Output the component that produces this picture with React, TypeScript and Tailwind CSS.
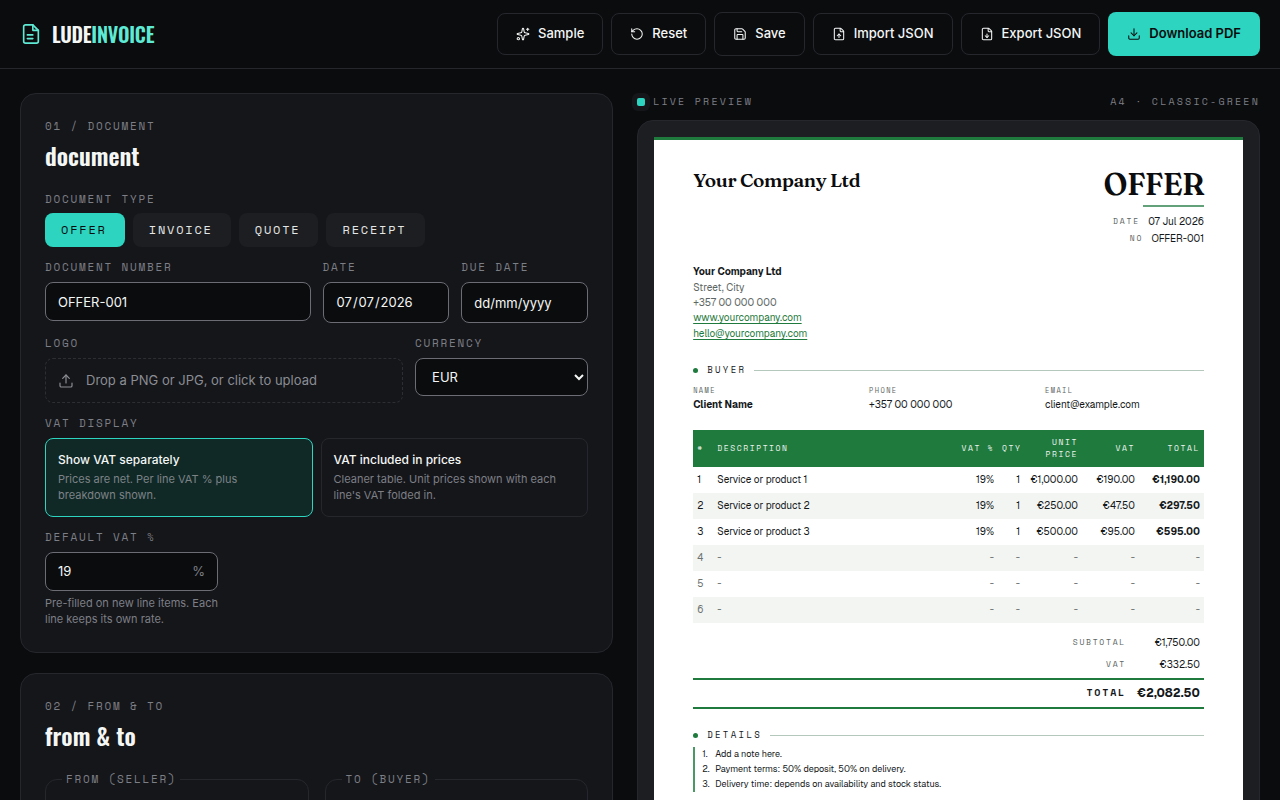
import type { ReactNode } from "react";
import { Download, FileDown, FileUp, RotateCcw, Save, Sparkles, Upload } from "lucide-react";

const mono = "font-['Space_Mono','Liberation_Mono',monospace]";
const condensed = "font-['Oswald','Roboto_Condensed','Liberation_Sans_Narrow',sans-serif]";
const serif = "font-['Fraunces','Liberation_Serif',serif] font-[550] tracking-[-0.02em] text-[#0b0c0e]";
const eyebrow = `${mono} text-[11px] leading-[17px] tracking-[0.16em] uppercase text-[#7d7f86]`;
const inputBox =
  "w-full rounded-lg border border-[#6b6c74] bg-[#0b0c0e] px-3 text-[13px] text-[#f4f7f5] outline-none focus:border-[#2dd4bf]";
const toolButton =
  "flex h-[42px] items-center gap-2 rounded-lg border border-[#26272d] px-[18px] text-[13px] font-medium text-[#f4f7f5]";

function Field({ label, id, className, children }: { label: string; id: string; className: string; children: ReactNode }) {
  return (
    <div className={`flex flex-col items-start gap-1.5 ${className}`}>
      <label htmlFor={id} className={eyebrow}>{label}</label>
      {children}
    </div>
  );
}

function Card({ step, title, children }: { step: string; title: string; children: ReactNode }) {
  return (
    <section className="rounded-2xl border border-[#26272d] bg-[#15161a] p-6">
      <p className={eyebrow}>{step}</p>
      <h2 className={`${condensed} mt-1 mb-5 text-2xl leading-8 font-semibold text-[#f4f7f5]`}>{title}</h2>
      {children}
    </section>
  );
}

function BrandMark() {
  return (
    <svg width="22" height="22" viewBox="0 0 24 24" fill="none" stroke="currentColor" strokeWidth="1.8" strokeLinecap="round" strokeLinejoin="round" className="text-[#5eead4]" aria-hidden>
      <path d="M14 2H6a2 2 0 0 0-2 2v16a2 2 0 0 0 2 2h12a2 2 0 0 0 2-2V8z" />
      <path d="M14 2v6h6M8 13h6M8 17h6" />
    </svg>
  );
}

function Header() {
  return (
    <header className="flex items-center justify-between border-b border-[#26272d] px-5 py-3">
      <a href="#" className={`${condensed} flex items-center gap-2.5 text-xl leading-7 font-semibold tracking-[-0.01em] text-[#f4f7f5]`}>
        <BrandMark />
        <span>LUDE<span className="text-[#5eead4]">INVOICE</span></span>
      </a>
      <div className="flex items-center gap-2">
        <button className={toolButton}><Sparkles size={14} strokeWidth={1.8} />Sample</button>
        <button className={toolButton}><RotateCcw size={14} strokeWidth={1.8} />Reset</button>
        <button className="flex h-11 items-center gap-2 rounded-lg border border-[#26272d] px-[18px] text-[13px] font-medium text-[#f4f7f5]"><Save size={14} strokeWidth={1.8} />Save</button>
        <button className={toolButton}><FileUp size={14} strokeWidth={1.8} />Import JSON</button>
        <button className={toolButton}><FileDown size={14} strokeWidth={1.8} />Export JSON</button>
        <button className="flex h-11 items-center gap-2 rounded-lg bg-[#2dd4bf] px-[19px] text-[13px] font-semibold text-[#0b0c0e]"><Download size={14} strokeWidth={1.8} />Download PDF</button>
      </div>
    </header>
  );
}

const types = ["Offer", "Invoice", "Quote", "Receipt"];

function DocumentCard() {
  return (
    <Card step="01 / Document" title="document">
      <div className="grid grid-cols-12 gap-3">
        <div className="col-span-12 flex flex-col gap-[5px]">
          <p className={eyebrow}>Document type</p>
          <div className="flex gap-2">
            {types.map((t, i) => (
              <button
                key={t}
                aria-pressed={i === 0}
                className={`${mono} h-[34px] rounded-lg pr-[18px] pl-4 text-xs tracking-[0.15em] uppercase ${i === 0 ? "bg-[#2dd4bf] text-[#0b0c0e]" : "bg-[#1d1e22] text-[#e4e7e5]"}`}
              >
                {t}
              </button>
            ))}
          </div>
        </div>
        <Field label="Document number" id="number" className="col-span-6">
          <input id="number" defaultValue="OFFER-001" className={`${inputBox} h-[39px]`} />
        </Field>
        <Field label="Date" id="date" className="col-span-3">
          <input id="date" type="date" defaultValue="2026-07-07" className={`${inputBox} h-[41px] [&::-webkit-calendar-picker-indicator]:opacity-0`} />
        </Field>
        <Field label="Due date" id="due" className="col-span-3">
          <input id="due" placeholder="dd/mm/yyyy" className={`${inputBox} h-[41px] placeholder:text-[#f4f7f5]`} />
        </Field>
        <Field label="Logo" id="logo" className="col-span-8">
          <button id="logo" className="flex h-[45px] w-full items-center gap-3 rounded-lg border border-dashed border-[#2d2e34] px-3 text-[13px] text-[#8b8d94]">
            <Upload size={16} strokeWidth={1.8} />
            Drop a PNG or JPG, or click to upload
          </button>
        </Field>
        <Field label="Currency" id="currency" className="col-span-4">
          <select id="currency" className={`${inputBox} h-[38px]`}>
            <option>EUR</option>
            <option>USD</option>
            <option>GBP</option>
          </select>
        </Field>
        <div className="col-span-12 flex flex-col gap-1.5">
          <p className={eyebrow}>VAT display</p>
          <div className="grid grid-cols-2 gap-2">
            <button aria-pressed className="rounded-lg border border-[#2dd4bf] bg-[#102927] pt-3 pr-5 pb-[13px] pl-3 text-left">
              <span className="block text-xs leading-[18px] font-medium text-[#f4f7f5]">Show VAT separately</span>
              <span className="mt-0.5 block text-[11px] leading-4 text-[#7d8286]">Prices are net. Per line VAT % plus breakdown shown.</span>
            </button>
            <button aria-pressed={false} className="rounded-lg border border-[#26272d] pt-3 pr-5 pb-[13px] pl-3 text-left">
              <span className="block text-xs leading-[18px] font-medium text-[#f4f7f5]">VAT included in prices</span>
              <span className="mt-0.5 block text-[11px] leading-4 text-[#7d7f86]">Cleaner table. Unit prices shown with each line's VAT folded in.</span>
            </button>
          </div>
        </div>
        <Field label="Default VAT %" id="vat" className="col-span-4 pb-px">
          <div className="flex h-[39px] w-full items-center rounded-lg border border-[#6b6c74] bg-[#0b0c0e] px-3 text-[13px] focus-within:border-[#2dd4bf]">
            <input id="vat" defaultValue="19" inputMode="decimal" className="min-w-0 flex-1 bg-transparent text-[#f4f7f5] outline-none" />
            <span className="text-[#7d7f86]">%</span>
          </div>
          <p className="-mt-0.5 text-[11px] leading-4 text-[#7d7f86]">Pre-filled on new line items. Each line keeps its own rate.</p>
        </Field>
      </div>
    </Card>
  );
}

function Party({ title }: { title: string }) {
  return (
    <fieldset className="min-w-0 rounded-xl border border-[#26272d] px-4 pt-6 pb-4">
      <legend className={`${eyebrow} px-1`}>{title}</legend>
      <input aria-label={title} className={`${inputBox} h-[39px]`} />
    </fieldset>
  );
}

const pdfLabel = `${mono} uppercase text-[#5d6663]`;

function SectionTitle({ children }: { children: string }) {
  return (
    <div className="flex items-center">
      <span className="mr-[9px] size-[5px] rounded-full bg-[#1f7a3d]" />
      <h3 className={`${mono} mr-2 text-[9px] leading-4 tracking-[0.26em] uppercase text-[#14181a]`}>{children}</h3>
      <span className="h-px flex-1 bg-[#b4c8bb]" />
    </div>
  );
}

const rows = [
  ["1", "Service or product 1", "19%", "1", "€1,000.00", "€190.00", "€1,190.00"],
  ["2", "Service or product 2", "19%", "1", "€250.00", "€47.50", "€297.50"],
  ["3", "Service or product 3", "19%", "1", "€500.00", "€95.00", "€595.00"],
  ["4", "-", "-", "-", "-", "-", "-"],
  ["5", "-", "-", "-", "-", "-", "-"],
  ["6", "-", "-", "-", "-", "-", "-"],
];
const heads = ["#", "Description", "VAT %", "Qty", "Unit price", "VAT", "Total"];
const notes = ["Add a note here.", "Payment terms: 50% deposit, 50% on delivery.", "Delivery time: depends on availability and stock status."];

function Paper() {
  return (
    <article className="border-t-[3px] border-[#1f7a3d] bg-white px-[39px] pt-[31px] pb-12 font-['Geist','Inter',sans-serif] text-[10px] text-[#14181a]">
      <div className="flex h-[93px] items-start justify-between">
        <h1 className={`${serif} text-[19px] leading-[18px]`}>Your Company Ltd</h1>
        <div className="flex flex-col items-end">
          <p className={`${serif} mb-1.5 text-[30px] leading-7`}>OFFER</p>
          <span className="mb-[6px] h-0.5 w-[61px] bg-[#63a17b]" />
          <p className="flex items-center gap-2 leading-[17px]"><span className={`${pdfLabel} text-[8px] tracking-[0.24em]`}>Date</span>07 Jul 2026</p>
          <p className="flex items-center gap-2 leading-[17px]"><span className={`${pdfLabel} text-[8px] tracking-[0.24em]`}>No</span>OFFER-001</p>
        </div>
      </div>
      <address className="flex flex-col items-start leading-4 text-[#5d6663] not-italic">
        <strong className="font-bold text-[#14181a]">Your Company Ltd</strong>
        <span className="leading-[15px]">Street, City</span>
        <span className="leading-[15px]">+357 00 000 000</span>
        <a href="#" className="text-[#1f7a3d] underline underline-offset-2">www.yourcompany.com</a>
        <a href="#" className="text-[#1f7a3d] underline underline-offset-2">hello@yourcompany.com</a>
      </address>

      <div className="mt-5">
        <SectionTitle>Buyer</SectionTitle>
        <dl className="mt-[7px] grid grid-cols-3 gap-[17px] leading-[14px]">
          <div>
            <dt className={`${pdfLabel} text-[7px] leading-3 tracking-[0.2em]`}>Name</dt>
            <dd className="mt-px font-bold">Client Name</dd>
          </div>
          <div>
            <dt className={`${pdfLabel} text-[7px] leading-3 tracking-[0.2em]`}>Phone</dt>
            <dd className="mt-px">+357 00 000 000</dd>
          </div>
          <div>
            <dt className={`${pdfLabel} text-[7px] leading-3 tracking-[0.2em]`}>Email</dt>
            <dd className="mt-px">client@example.com</dd>
          </div>
        </dl>
      </div>

      <table className="mt-[18px] w-full table-fixed border-collapse">
        <colgroup>
          <col className="w-5" /><col /><col className="w-[42px]" /><col className="w-[26px]" /><col className="w-[58px]" /><col className="w-[57px]" /><col className="w-[65px]" />
        </colgroup>
        <thead>
          <tr className="h-[37px] bg-[#1f7a3d] text-[#eef5f0]">
            {heads.map((h, i) => (
              <th key={h} scope="col" className={`${mono} px-1 pb-0.5 text-[8px] leading-3 font-normal tracking-[0.2em] uppercase ${i < 2 ? "text-left" : "text-right"} ${i === 2 || i === 3 ? "whitespace-nowrap" : ""}`}>{h}</th>
            ))}
          </tr>
        </thead>
        <tbody>
          {rows.map((r, n) => (
            <tr key={r[0]} className={`h-[26px] ${n % 2 ? "bg-[#f3f5f3]" : ""} ${n > 2 ? "text-[#6d7471]" : ""}`}>
              {r.map((c, i) => (
                <td key={i} className={`px-1 pb-0.5 ${i < 2 ? "text-left" : "text-right"} ${i === 6 && n < 3 ? "font-bold" : ""}`}>{c}</td>
              ))}
            </tr>
          ))}
        </tbody>
      </table>

      <dl className="mt-2">
        <div className="flex h-[22px] items-center justify-end pr-1">
          <dt className={`${pdfLabel} text-[8px] tracking-[0.22em]`}>Subtotal</dt>
          <dd className="w-[74px] text-right">€1,750.00</dd>
        </div>
        <div className="flex h-[22px] items-center justify-end pr-1">
          <dt className={`${pdfLabel} text-[8px] tracking-[0.22em]`}>VAT</dt>
          <dd className="w-[74px] text-right">€332.50</dd>
        </div>
        <div className="mt-[3px] flex h-[31px] items-center justify-end border-y-2 border-[#1f7a3d] pr-1 pb-0.5 font-bold">
          <dt className={`${mono} text-[10px] tracking-[0.18em] uppercase`}>Total</dt>
          <dd className="w-[74px] text-right text-xs">€2,082.50</dd>
        </div>
      </dl>

      <div className="mt-[18px]">
        <SectionTitle>Details</SectionTitle>
        <ol className="mt-1 border-l-2 border-[#4a9964] pl-[7px] text-[9px] leading-[15px]">
          {notes.map((n, i) => (
            <li key={n} className="flex"><span className="w-[13px]">{i + 1}.</span>{n}</li>
          ))}
        </ol>
      </div>
    </article>
  );
}

export default function App() {
  return (
    <div className="h-screen overflow-hidden bg-[#0b0c0e] font-['Inter',sans-serif]">
      <Header />
      <main className="grid grid-cols-[1fr_1.05fr] gap-6 px-5 pt-6">
        <div className="flex min-w-0 flex-col gap-5">
          <DocumentCard />
          <Card step="02 / From & to" title="from & to">
            <div className="grid grid-cols-2 gap-4">
              <Party title="From (seller)" />
              <Party title="To (buyer)" />
            </div>
          </Card>
        </div>
        <div className="flex min-w-0 flex-col">
          <div className={`${mono} mb-2.5 flex items-center justify-between text-[10px] leading-[17px] tracking-[0.22em] uppercase text-[#7d7f86]`}>
            <span className="flex items-center gap-2">
              <span className="size-2 rounded-xs bg-[#2dd4bf] ring-[5px] ring-[#15161a]" />
              Live preview
            </span>
            <span>A4 · classic-green</span>
          </div>
          <div className="flex-1 rounded-2xl border border-[#26272d] bg-[#1d1e22] p-4">
            <Paper />
          </div>
        </div>
      </main>
    </div>
  );
}
